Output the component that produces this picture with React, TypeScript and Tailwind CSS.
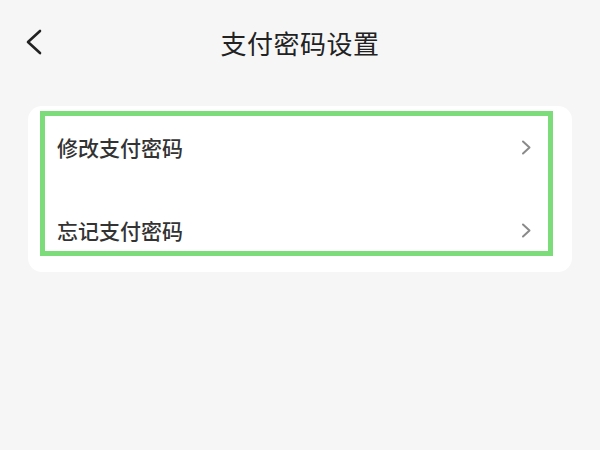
const items = ["修改支付密码", "忘记支付密码"];

export default function App() {
  return (
    <div
      className="w-[600px] h-[450px] bg-[#f6f6f6] overflow-hidden"
      style={{ fontFamily: '"Noto Sans CJK SC", "Noto Sans", sans-serif' }}
    >
      {/* header */}
      <div className="relative h-[84px] flex items-center justify-center">
        <svg
          className="absolute left-[24px] top-[29px]"
          width="20"
          height="26"
          viewBox="0 0 20 26"
          fill="none"
          stroke="#222"
          strokeWidth="2.6"
          strokeLinecap="round"
          strokeLinejoin="round"
        >
          <path d="M16 2 L4 13 L16 24" />
        </svg>
        <span className="text-[26px] text-[#222] tracking-[0.5px]">支付密码设置</span>
      </div>

      {/* card */}
      <div className="relative mx-[28px] mt-[22px] bg-white rounded-[14px]">
        {items.map((label) => (
          <div key={label} className="h-[83px] flex items-center justify-between pl-[29px] pr-[40px]">
            <span className="text-[21px] font-medium text-[#333]">{label}</span>
            <svg
              width="11"
              height="15"
              viewBox="0 0 11 15"
              fill="none"
              stroke="#8a8a8a"
              strokeWidth="2"
              strokeLinecap="round"
              strokeLinejoin="round"
            >
              <path d="M2 1.5 L8.5 7.5 L2 13.5" />
            </svg>
          </div>
        ))}
        <div className="absolute left-[12px] top-[5px] w-[513px] h-[145px] border-[5px] border-[#7ddc7a] pointer-events-none" />
      </div>
    </div>
  );
}
